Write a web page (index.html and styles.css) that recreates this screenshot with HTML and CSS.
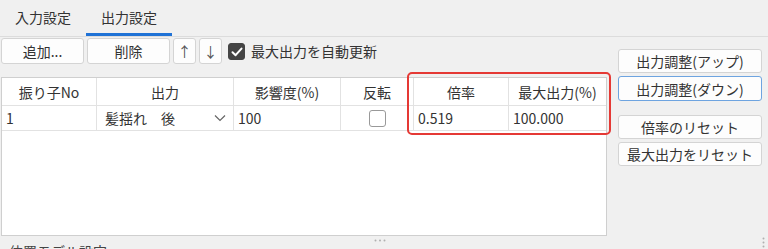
FILE: index.html
```html
<!DOCTYPE html>
<html lang="ja">

<head>
  <meta charset="UTF-8">
  <meta name="viewport" content="width=device-width, initial-scale=1.0">
  <title>出力設定</title>
  <link rel="stylesheet" href="styles.css">
</head>

<body>
  <nav class="tabs">
    <div class="tab">入力設定</div>
    <div class="tab is-active">出力設定</div>
  </nav>

  <main class="panel">
    <section class="left">
      <div class="toolbar">
        <button class="btn btn-wide">追加...</button>
        <button class="btn btn-wide">削除</button>
        <button class="btn btn-small">↑</button>
        <button class="btn btn-small">↓</button>
        <label class="check">
          <span class="check-box is-checked">
            <svg viewBox="0 0 16 16" width="16" height="16">
              <path d="M3.5 8.2 L6.6 11.2 L12.5 4.6" fill="none" stroke="#fff" stroke-width="2" stroke-linecap="round" stroke-linejoin="round" />
            </svg>
          </span>
          最大出力を自動更新
        </label>
      </div>

      <div class="grid">
        <div class="grid-row grid-head">
          <div class="cell">振り子No</div>
          <div class="cell">出力</div>
          <div class="cell">影響度(%)</div>
          <div class="cell">反転</div>
          <div class="cell">倍率</div>
          <div class="cell">最大出力(%)</div>
        </div>
        <div class="grid-row grid-data">
          <div class="cell">1</div>
          <div class="cell cell-select">
            <span>髪揺れ　後</span>
            <svg viewBox="0 0 12 8" width="12" height="8">
              <path d="M1 1.5 L6 6.5 L11 1.5" fill="none" stroke="#666" stroke-width="1.2" />
            </svg>
          </div>
          <div class="cell">100</div>
          <div class="cell cell-center"><span class="check-box"></span></div>
          <div class="cell">0.519</div>
          <div class="cell">100.000</div>
        </div>
      </div>

      <!-- 注目箇所の赤枠 -->
      <div class="highlight"></div>
    </section>

    <aside class="right">
      <button class="btn btn-side">出力調整(アップ)</button>
      <button class="btn btn-side is-focus">出力調整(ダウン)</button>
      <button class="btn btn-side btn-gap">倍率のリセット</button>
      <button class="btn btn-side">最大出力をリセット</button>
    </aside>
  </main>

  <svg class="splitter" viewBox="0 0 12 3" width="12" height="3">
    <circle cx="1.5" cy="1.5" r="1" fill="#b0b0b0" />
    <circle cx="6" cy="1.5" r="1" fill="#b0b0b0" />
    <circle cx="10.5" cy="1.5" r="1" fill="#b0b0b0" />
  </svg>
  <div class="section-title">位置モデル設定</div>
  <svg class="side-dots" viewBox="0 0 3 12" width="3" height="12">
    <circle cx="1.5" cy="1.5" r="1" fill="#b0b0b0" />
    <circle cx="1.5" cy="5.5" r="1" fill="#b0b0b0" />
    <circle cx="1.5" cy="9.5" r="1" fill="#b0b0b0" />
  </svg>
</body>

</html>
```

FILE: styles.css
```css
html {
  box-sizing: border-box;
  font-family: "Noto Sans CJK JP", "Noto Sans", sans-serif;
  font-size: 14px;
}

*,
*:before,
*:after {
  box-sizing: inherit;
}

body {
  margin: 0;
  height: 249px;
  overflow: hidden;
  background-color: #f0f0f0;
  color: #333;
  position: relative;
}

/* tabs */
.tabs {
  display: flex;
  height: 37px;
  border-bottom: 1px solid #dcdcdc;
}

.tab {
  width: 86px;
  height: 36px;
  line-height: 34px;
  text-align: center;
  color: #333;
}

.tab.is-active {
  box-shadow: inset 0 -3px 0 #1f72d6;
}

/* main area */
.panel {
  display: flex;
}

.left {
  position: relative;
  width: 606px;
  margin-left: 1px;
}

.toolbar {
  display: flex;
  align-items: center;
  gap: 3px;
  height: 26px;
  margin-top: 1px;
}

.btn {
  font-family: inherit;
  font-size: 14px;
  color: #333;
  background-color: #fdfdfd;
  border: 1px solid #d4d4d4;
  border-radius: 3px;
  padding: 0;
  line-height: 1;
}

.btn-wide {
  width: 83px;
  height: 26px;
}

.btn-small {
  width: 23px;
  height: 26px;
  color: #555;
}

.check {
  display: flex;
  align-items: center;
  gap: 6px;
  margin-left: 3px;
}

.check-box {
  display: inline-block;
  width: 17px;
  height: 17px;
  border: 1px solid #999;
  border-radius: 3px;
  background-color: #fff;
}

.check-box.is-checked {
  background-color: #444;
  border-color: #444;
}

.check-box svg {
  display: block;
  margin: 0;
}

/* grid table */
.grid {
  margin-top: 13px;
  height: 159px;
  background-color: #fff;
  border: 1px solid #cfcfcf;
}

.grid-row {
  display: grid;
  grid-template-columns: 95px 137px 107px 73px 95px 97px;
}

.grid-head {
  height: 28px;
  border-bottom: 1px solid #e2e2e2;
}

.grid-head .cell {
  justify-content: center;
}

.grid-data {
  height: 25px;
  border-bottom: 1px solid #e2e2e2;
}

.cell {
  display: flex;
  align-items: center;
  padding: 0 4px;
  border-right: 1px solid #e2e2e2;
  white-space: nowrap;
}

.cell:last-child {
  border-right: none;
}

.cell-select {
  justify-content: space-between;
  padding: 0 7px 0 8px;
}

.cell-center {
  justify-content: center;
}

.highlight {
  position: absolute;
  left: 406px;
  top: 35px;
  width: 204px;
  height: 63px;
  border: 2px solid #e53935;
  border-radius: 5px;
}

/* right buttons */
.right {
  display: flex;
  flex-direction: column;
  gap: 3px;
  margin-left: 11px;
  padding-top: 12px;
}

.btn-side {
  width: 144px;
  height: 24px;
}

.btn-side.is-focus {
  border-color: #6ea4e0;
  height: 25px;
}

.btn-side.btn-gap {
  margin-top: 11px;
}

/* bottom */
.splitter {
  position: absolute;
  left: 374px;
  top: 239px;
}

.section-title {
  position: absolute;
  left: 9px;
  top: 241px;
  color: #444;
}

.side-dots {
  position: absolute;
  right: 3px;
  top: 237px;
}
```
